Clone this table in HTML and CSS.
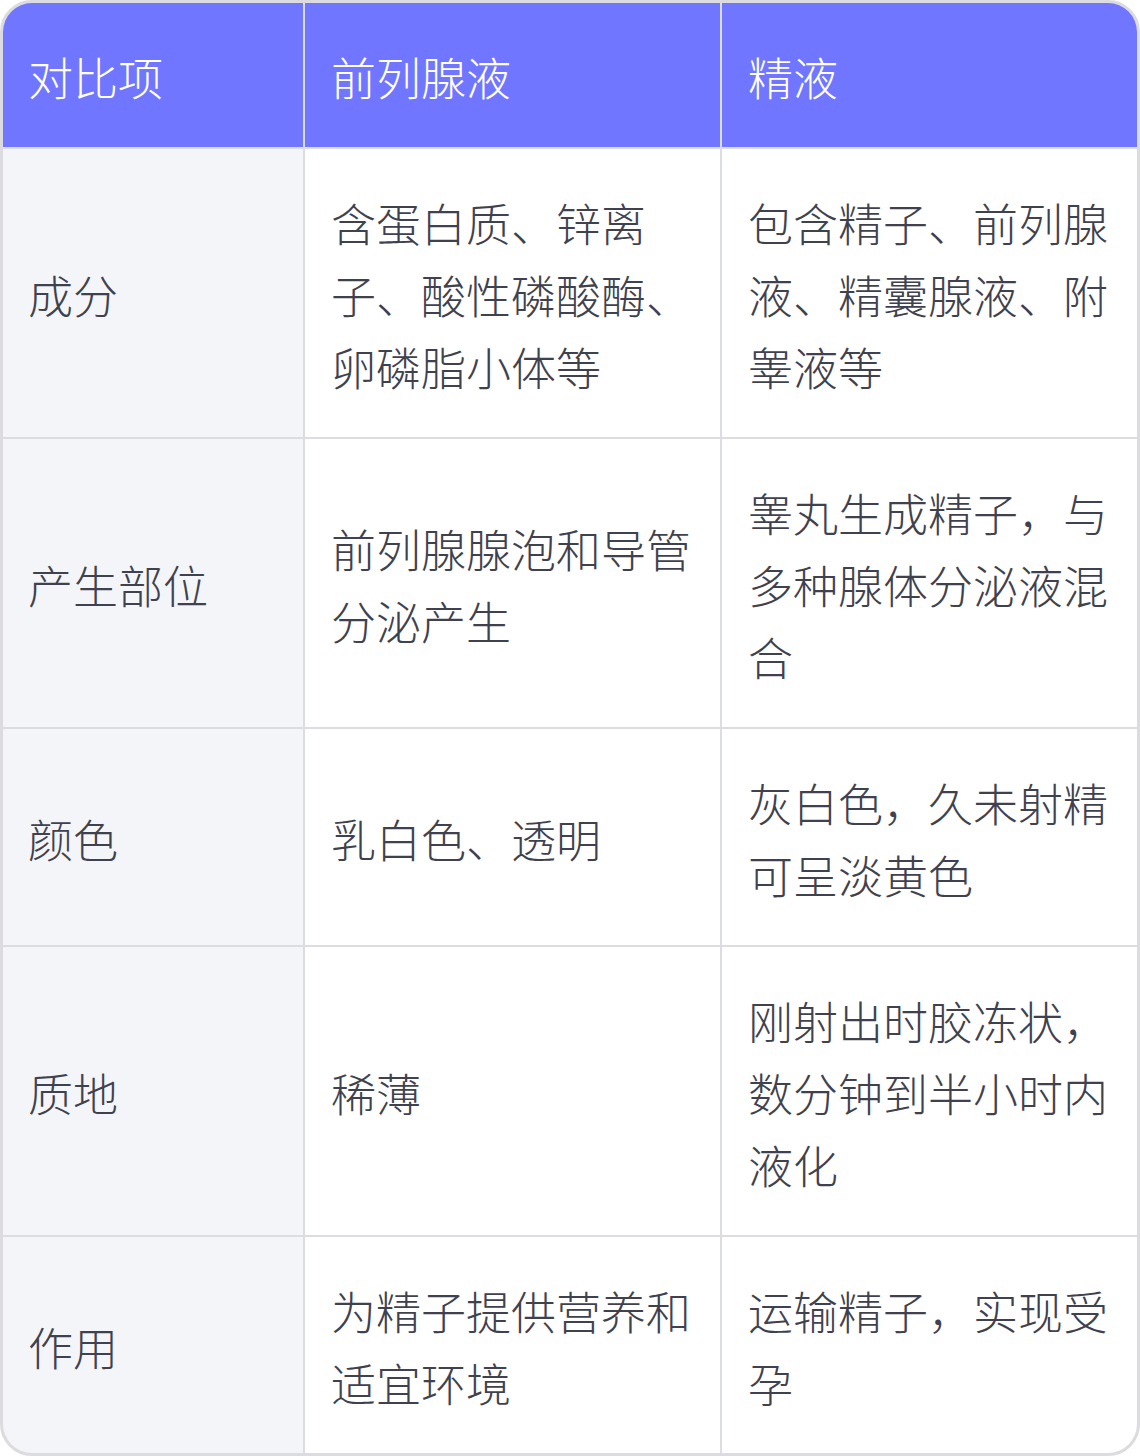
FILE: index.html
```html
<!DOCTYPE html>
<html lang="zh-CN">
<head>
<meta charset="utf-8">
<link rel="stylesheet" href="styles.css">
</head>
<body>
<div class="table">
  <div class="cell head first">对比项</div>
  <div class="cell head">前列腺液</div>
  <div class="cell head">精液</div>

  <div class="cell label">成分</div>
  <div class="cell">含蛋白质、锌离子、酸性磷酸酶、卵磷脂小体等</div>
  <div class="cell">包含精子、前列腺液、精囊腺液、附睾液等</div>

  <div class="cell label">产生部位</div>
  <div class="cell">前列腺腺泡和导管分泌产生</div>
  <div class="cell">睾丸生成精子，与多种腺体分泌液混合</div>

  <div class="cell label">颜色</div>
  <div class="cell">乳白色、透明</div>
  <div class="cell">灰白色，久未射精可呈淡黄色</div>

  <div class="cell label">质地</div>
  <div class="cell">稀薄</div>
  <div class="cell">刚射出时胶冻状，数分钟到半小时内液化</div>

  <div class="cell label">作用</div>
  <div class="cell">为精子提供营养和适宜环境</div>
  <div class="cell">运输精子，实现受孕</div>
</div>
</body>
</html>
```
FILE: styles.css
```css
html, body {
  margin: 0;
  padding: 0;
  background: #ffffff;
}

.table {
  width: 1140px;
  box-sizing: border-box;
  border: 3px solid #dcdce0;
  border-radius: 32px;
  overflow: hidden;
  display: grid;
  grid-template-columns: 300px 415px 415px;
  gap: 2px;
  background: #dcdde3;
  font-family: "Noto Sans CJK SC", "Noto Sans", sans-serif;
  font-size: 45px;
  font-weight: 300;
  line-height: 72px;
  color: #3f424e;
}

.cell {
  background: #ffffff;
  padding: 38px 18px 34px 26px;
  display: flex;
  align-items: center;
  word-break: break-all;
}

.cell.label {
  background: #f4f5f9;
  padding-left: 25px;
}

.cell.head {
  background: #7076ff;
  color: #ffffff;
}

.cell.head.first {
  padding-left: 25px;
}
```
